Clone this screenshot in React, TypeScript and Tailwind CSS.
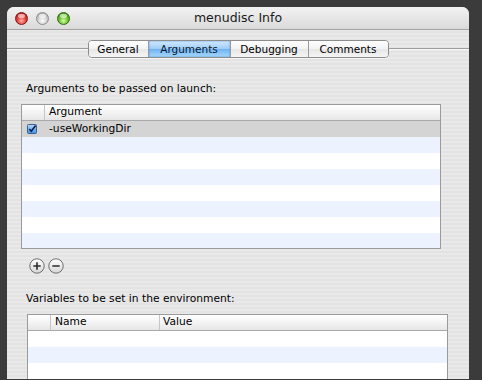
import React from 'react';

// Tiger-era "Info" panel: pinstriped window, segmented tabs, two list tables

const tabs = [
  { label: 'General', w: 'w-[60px]' },
  { label: 'Arguments', w: 'w-[82px]', active: true },
  { label: 'Debugging', w: 'w-[78px]' },
  { label: 'Comments', w: 'w-[79px]' },
];

const Light = ({ color }: { color: 'red' | 'gray' | 'green' }) => {
  const cls =
    color === 'red'
      ? 'bg-[image:radial-gradient(circle_at_50%_70%,#ffb0a8_0%,#e3413b_45%,#a3120f_100%)] border-[#7e1613]'
      : color === 'gray'
      ? 'bg-[image:radial-gradient(circle_at_50%_70%,#ffffff_0%,#d2d2d2_45%,#9a9a9a_100%)] border-[#8a8a8a]'
      : 'bg-[image:radial-gradient(circle_at_50%_70%,#d9ffb0_0%,#6cc42c_45%,#2f7d0c_100%)] border-[#2f6a12]';
  return (
    <div className={`w-[13px] h-[13px] rounded-full border relative ${cls}`}>
      <div className="mx-auto mt-[1px] w-[7px] h-[4px] rounded-full bg-white/60" />
    </div>
  );
};

const CheckBox = () => (
  <svg width="10" height="10" viewBox="0 0 10 10">
    <defs>
      <linearGradient id="cb" x1="0" y1="0" x2="0" y2="1">
        <stop offset="0" stopColor="#b7dbff" />
        <stop offset="1" stopColor="#3d8ee6" />
      </linearGradient>
    </defs>
    <rect x="0.5" y="0.5" width="9" height="9" rx="1" fill="url(#cb)" stroke="#3b5f8f" />
    <path d="M2.3 5 L4.3 7.2 L8.6 1.6" fill="none" stroke="#0c1f4a" strokeWidth="1.6" />
  </svg>
);

const RoundButton = ({ sign }: { sign: '+' | '-' }) => (
  <svg width="16" height="16" viewBox="0 0 16 16">
    <defs>
      <linearGradient id={`rb${sign === '+' ? 'p' : 'm'}`} x1="0" y1="0" x2="0" y2="1">
        <stop offset="0" stopColor="#ffffff" />
        <stop offset="1" stopColor="#d6d6d6" />
      </linearGradient>
    </defs>
    <circle cx="8" cy="8" r="7.2" fill={`url(#rb${sign === '+' ? 'p' : 'm'})`} stroke="#6d6d6d" strokeWidth="1" />
    <path d="M4.3 8 H11.7" stroke="#2a2a2a" strokeWidth="1.6" />
    {sign === '+' && <path d="M8 4.3 V11.7" stroke="#2a2a2a" strokeWidth="1.6" />}
  </svg>
);

const HeaderCell = ({ className, children }: { className: string; children?: React.ReactNode }) => (
  <div className={`h-full flex items-center border-r border-[#c6c6c6] ${className}`}>{children}</div>
);

const rowTone = (i: number) => (i % 2 === 0 ? 'bg-[#edf3fe]' : 'bg-white');

export default function App() {
  return (
    <div className="w-[482px] h-[380px] bg-[#3b3b3b] pt-[7px] pl-[7px] overflow-hidden font-['DejaVu_Sans',sans-serif] text-black">
      <div className="w-[462px] h-[372px] rounded-t-[7px] overflow-hidden bg-[image:repeating-linear-gradient(0deg,#e9e9e9_0px,#e9e9e9_2px,#e3e3e3_2px,#e3e3e3_4px)] flex flex-col">
        {/* title bar */}
        <div className="h-[23px] shrink-0 border-b border-[#a3a3a3] bg-[image:linear-gradient(#f2f2f2,#dadada)] grid grid-cols-[1fr_auto_1fr] items-center">
          <div className="flex items-center gap-[8px] pl-[8px]">
            <Light color="red" />
            <Light color="gray" />
            <Light color="green" />
          </div>
          <div className="text-[12.5px] leading-none text-[#1a1a1a]">menudisc Info</div>
          <div />
        </div>

        {/* segmented tabs */}
        <div className="mt-[10px] h-[18px] flex items-center">
          <div className="flex-1 h-[2px] border-t border-[#9d9d9d] border-b border-b-white/70" />
          <div className="flex h-[18px] rounded-[4px] border border-[#8c8c8c] overflow-hidden shadow-[0_1px_0_rgba(255,255,255,0.6)]">
            {tabs.map((t, i) => (
              <div
                key={t.label}
                className={`${t.w} h-full flex items-center justify-center text-[10.5px] leading-none ${
                  i < tabs.length - 1 ? 'border-r border-[#9a9a9a]' : ''
                } ${
                  t.active
                    ? 'bg-[image:linear-gradient(#d4ebff,#9cccf7_50%,#6fb2f2_51%,#a9dafc)] text-[#0a1a33] shadow-[inset_0_0_2px_#4a8fd6]'
                    : 'bg-[image:linear-gradient(#ffffff,#f3f3f3_50%,#e6e6e6_51%,#f5f5f5)]'
                }`}
              >
                {t.label}
              </div>
            ))}
          </div>
          <div className="flex-1 h-[2px] border-t border-[#9d9d9d] border-b border-b-white/70" />
        </div>

        {/* arguments */}
        <div className="mt-[24px] pl-[19px] h-[13px] text-[10.7px] leading-[13px]">Arguments to be passed on launch:</div>
        <div className="mt-[9px] ml-[14px] w-[420px] h-[145px] border border-[#9a9a9a] bg-white flex flex-col overflow-hidden">
          <div className="h-[16px] shrink-0 border-b border-[#a9a9a9] bg-[image:linear-gradient(#ffffff,#f1f1f1_60%,#e6e6e6)] flex text-[10.7px]">
            <HeaderCell className="w-[23px]" />
            <div className="pl-[4px] flex items-center">Argument</div>
          </div>
          <div className="flex-1 overflow-hidden">
            <div className="h-[16px] bg-[#d4d4d4] flex items-center text-[10.7px]">
              <div className="w-[24px] pl-[5px] flex items-center">
                <CheckBox />
              </div>
              <div className="pl-[3px]">-useWorkingDir</div>
            </div>
            {Array.from({ length: 7 }).map((_, i) => (
              <div key={i} className={`h-[16px] ${rowTone(i)}`} />
            ))}
          </div>
        </div>

        {/* add / remove */}
        <div className="mt-[9px] ml-[22px] flex gap-[3px]">
          <RoundButton sign="+" />
          <RoundButton sign="-" />
        </div>

        {/* environment */}
        <div className="mt-[18px] pl-[19px] h-[13px] text-[10.7px] leading-[13px]">Variables to be set in the environment:</div>
        <div className="mt-[9px] ml-[20px] w-[421px] flex-1 border border-b-0 border-[#9a9a9a] bg-white flex flex-col overflow-hidden">
          <div className="h-[16px] shrink-0 border-b border-[#a9a9a9] bg-[image:linear-gradient(#ffffff,#f1f1f1_60%,#e6e6e6)] flex text-[10.7px]">
            <HeaderCell className="w-[23px]" />
            <HeaderCell className="w-[109px] pl-[4px]">Name</HeaderCell>
            <div className="pl-[3px] flex items-center">Value</div>
          </div>
          <div className="flex-1 overflow-hidden">
            {Array.from({ length: 4 }).map((_, i) => (
              <div key={i} className={`h-[16px] ${i % 2 === 0 ? 'bg-white' : 'bg-[#edf3fe]'}`} />
            ))}
          </div>
        </div>
      </div>
    </div>
  );
}
